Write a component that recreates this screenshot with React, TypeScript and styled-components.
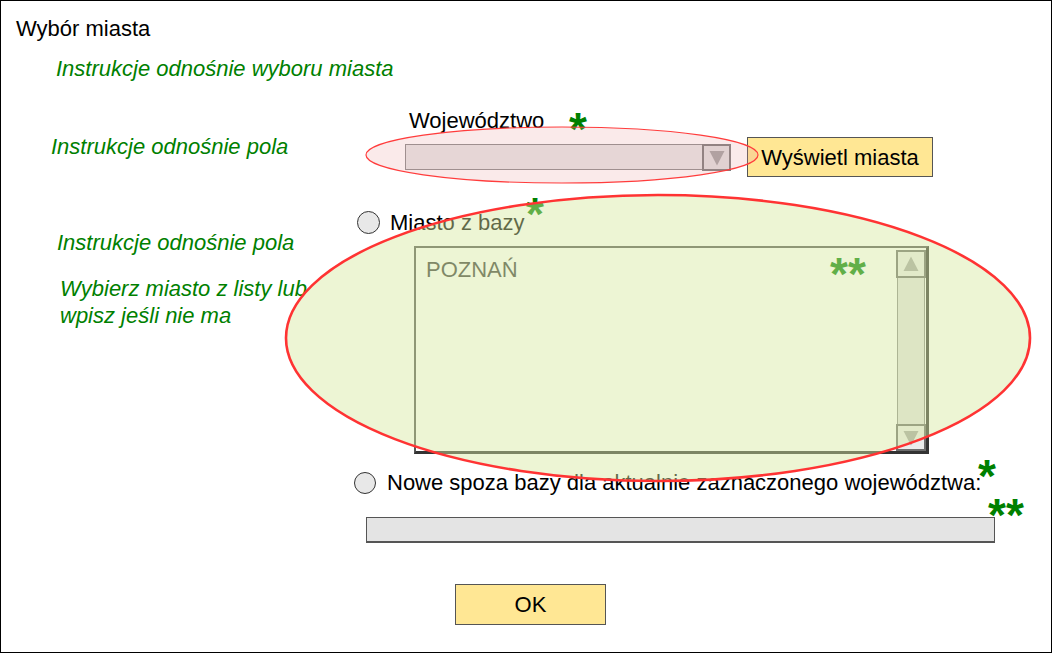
import React from "react";
import styled, { createGlobalStyle } from "styled-components";

const Global = createGlobalStyle`
  html, body { margin: 0; padding: 0; background: #fff; }
  body { font-family: "Liberation Sans", Arial, sans-serif; }
  *, *::before, *::after { box-sizing: border-box; }
`;

const Frame = styled.main`
  position: relative;
  width: 1052px;
  height: 653px;
  border: 1px solid #000;
  background: #fff;
  font-family: "Liberation Sans", Arial, sans-serif;
  font-size: 22px;
  line-height: 25px;
  color: #000;
`;

const Title = styled.h1`
  margin: 15px 0 0 15px;
  font-size: 22px;
  font-weight: normal;
  line-height: 25px;
`;

const Note = styled.p<{ $indent: number; $top?: number; $width?: number; $lh?: number }>`
  margin: ${(p) => p.$top ?? 0}px 0 0 ${(p) => p.$indent}px;
  font-style: italic;
  color: #008000;
  line-height: ${(p) => p.$lh ?? 25}px;
  ${(p) => (p.$width ? `max-width: ${p.$width}px;` : "")}
`;

const Section = styled.section<{ $gap: number }>`
  display: grid;
  grid-template-columns: 353px 1fr;
  margin-top: ${(p) => p.$gap}px;
`;

const NoteColumn = styled.div<{ $pad: number }>`
  padding-top: ${(p) => p.$pad}px;
`;

const FormColumn = styled.div<{ $indent?: number }>`
  display: flex;
  flex-direction: column;
  align-items: flex-start;
  padding-left: ${(p) => p.$indent ?? 0}px;
`;

const FieldLabel = styled.label`
  margin-left: 4px;
  height: 25px;
`;

const SelectRow = styled.div`
  display: flex;
  align-items: center;
  gap: 16px;
  margin-top: 4px;
`;

const Select = styled.div`
  width: 326px;
  height: 26px;
  border: 1px solid #8e8e8e;
  background: #e6e6e6;
  display: flex;
  justify-content: flex-end;
`;

const SelectArrow = styled.span`
  width: 29px;
  height: 27px;
  margin: -1px -1px 0 0;
  border: 2px solid #7e7e7e;
  background: #e0e0e0;
  display: flex;
  align-items: center;
  justify-content: center;
`;

const YellowButton = styled.button<{ $w: number; $h: number }>`
  width: ${(p) => p.$w}px;
  height: ${(p) => p.$h}px;
  padding: 0;
  background: #ffe794;
  border: 1px solid #555;
  font-family: "Liberation Sans", Arial, sans-serif;
  font-size: 22px;
  line-height: 25px;
  color: #000;
`;

const RadioRow = styled.div<{ $gap: number; $indent: number }>`
  display: flex;
  align-items: center;
  gap: ${(p) => p.$gap}px;
  height: 25px;
  margin-left: ${(p) => p.$indent}px;
`;

const Radio = styled.span<{ $size: number }>`
  width: ${(p) => p.$size}px;
  height: ${(p) => p.$size}px;
  border-radius: 50%;
  border: 1px solid #333;
  background: #e8e8e8;
  flex: none;
`;

const ListBox = styled.div`
  margin: 11px 0 0 60px;
  width: 515px;
  height: 208px;
  border: 2px solid #555;
  border-right: 3px solid #333;
  border-bottom: 3px solid #333;
  background: #fff;
  display: flex;
`;

const ListItems = styled.div`
  flex: 1;
  padding: 9px 0 0 10px;
  color: #3a3a3a;
`;

const ScrollBar = styled.div`
  width: 30px;
  padding-top: 2px;
  display: flex;
  flex-direction: column;
`;

const ScrollButton = styled.span<{ $h: number }>`
  height: ${(p) => p.$h}px;
  border: 2px solid #6c6c6c;
  background: #ececec;
  display: flex;
  align-items: center;
  justify-content: center;
  flex: none;
`;

const ScrollTrack = styled.span`
  flex: 1;
  margin: 0 1px;
  background: #e2e2e2;
  border-left: 1px solid #8a8a8a;
  border-right: 1px solid #8a8a8a;
`;

const TextInput = styled.div`
  margin: 22px 0 0 12px;
  width: 629px;
  height: 26px;
  border: 1px solid #555;
  border-bottom-width: 2px;
  background: #e4e4e4;
`;

const OkWrap = styled.div`
  margin: 41px 0 0 101px;
`;

const Mark = styled.span<{ $x: number; $y: number }>`
  position: absolute;
  left: ${(p) => p.$x}px;
  top: ${(p) => p.$y}px;
  font-family: "Liberation Sans", Arial, sans-serif;
  font-weight: bold;
  font-size: 46px;
  line-height: 46px;
  color: #008000;
  white-space: nowrap;
`;

const Overlay = styled.svg`
  position: absolute;
  left: -1px;
  top: -1px;
  width: 1053px;
  height: 654px;
  pointer-events: none;
`;

const Tri = ({ dir, fill = "#a4a4a4" }: { dir: "up" | "down"; fill?: string }) => (
  <svg width="16" height="16" viewBox="0 0 16 16">
    {dir === "down" ? (
      <polygon points="0.5,1 15.5,1 8,15.5" fill={fill} />
    ) : (
      <polygon points="0.5,15 15.5,15 8,0.5" fill={fill} />
    )}
  </svg>
);

export default function App() {
  return (
    <>
      <Global />
      <Frame>
        <Title>Wybór miasta</Title>
        <Note $indent={55} $top={15}>
          Instrukcje odnośnie wyboru miasta
        </Note>

        <Section $gap={27}>
          <NoteColumn $pad={26}>
            <Note $indent={50}>Instrukcje odnośnie pola</Note>
          </NoteColumn>
          <FormColumn $indent={51}>
            <FieldLabel>Województwo</FieldLabel>
            <SelectRow>
              <Select>
                <SelectArrow>
                  <Tri dir="down" />
                </SelectArrow>
              </Select>
              <YellowButton $w={186} $h={40}>
                Wyświetl miasta
              </YellowButton>
            </SelectRow>
          </FormColumn>
        </Section>

        <Section $gap={33}>
          <NoteColumn $pad={20}>
            <Note $indent={56}>Instrukcje odnośnie pola</Note>
            <Note $indent={59} $top={20} $width={262} $lh={27}>
              Wybierz miasto z listy lub wpisz jeśli nie ma
            </Note>
          </NoteColumn>
          <FormColumn>
            <RadioRow $gap={10} $indent={3}>
              <Radio $size={23} />
              <span>Miasto z bazy</span>
            </RadioRow>
            <ListBox>
              <ListItems>POZNAŃ</ListItems>
              <ScrollBar>
                <ScrollButton $h={28}>
                  <Tri dir="up" />
                </ScrollButton>
                <ScrollTrack />
                <ScrollButton $h={27}>
                  <Tri dir="down" />
                </ScrollButton>
              </ScrollBar>
            </ListBox>
          </FormColumn>
        </Section>

        <Section $gap={16}>
          <NoteColumn $pad={0} />
          <FormColumn>
            <RadioRow $gap={11} $indent={0}>
              <Radio $size={22} />
              <span>Nowe spoza bazy dla aktualnie zaznaczonego województwa:</span>
            </RadioRow>
            <TextInput />
            <OkWrap>
              <YellowButton $w={151} $h={41}>
                OK
              </YellowButton>
            </OkWrap>
          </FormColumn>
        </Section>

        <Mark $x={568} $y={105}>*</Mark>
        <Mark $x={525} $y={190}>*</Mark>
        <Mark $x={829} $y={250}>**</Mark>
        <Mark $x={977} $y={452}>*</Mark>
        <Mark $x={987} $y={491}>**</Mark>

        <Overlay viewBox="0 0 1053 654">
          <ellipse
            cx="562"
            cy="155"
            rx="196"
            ry="28"
            fill="rgba(232,150,150,0.2)"
            stroke="#ff3c3c"
            strokeWidth="1.2"
          />
          <ellipse
            cx="658"
            cy="338"
            rx="372"
            ry="143"
            fill="rgba(214,232,160,0.45)"
            stroke="#ff3333"
            strokeWidth="2.6"
          />
        </Overlay>
      </Frame>
    </>
  );
}
